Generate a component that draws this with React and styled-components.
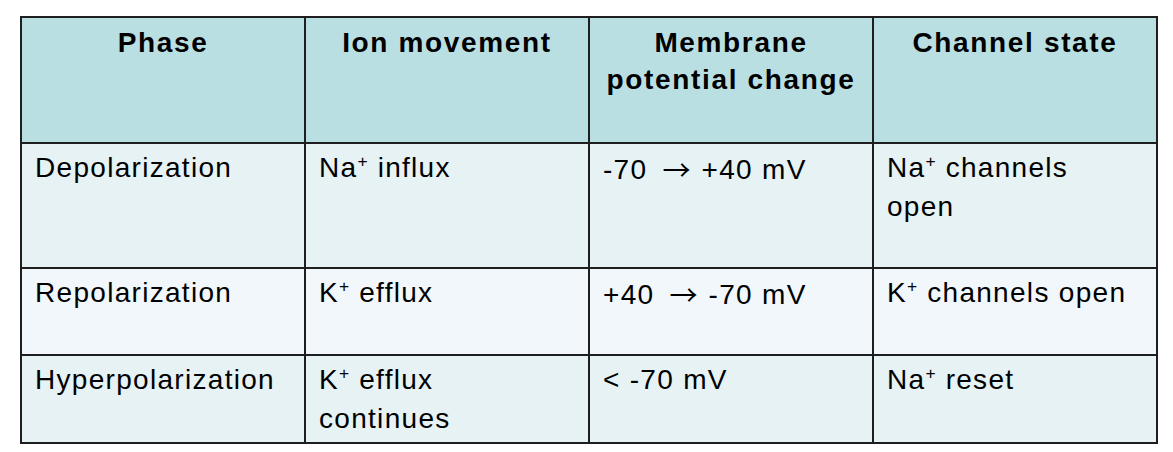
import React from "react";
import styled, { createGlobalStyle } from "styled-components";

const Global = createGlobalStyle`
  html, body { margin: 0; padding: 0; background: #ffffff; }
  body { font-family: "Liberation Sans", Arial, sans-serif; }
`;

const Page = styled.div`
  padding: 16px 0 0 20px;
`;

const Table = styled.table`
  border-collapse: collapse;
  table-layout: fixed;
  width: 1136px;
  font-family: "Liberation Sans", Arial, sans-serif;
  font-size: 28px;
  color: #000;
`;

const Row = styled.tr`
  height: ${(p) => p.$h}px;
  background: ${(p) => p.$bg};
`;

const Head = styled.th`
  border: 2px solid #1e1e1e;
  padding: 6px 8px;
  vertical-align: top;
  text-align: center;
  font-weight: bold;
  line-height: 37px;
  letter-spacing: 1.65px;
`;

const Cell = styled.td`
  border: 2px solid #1e1e1e;
  padding: 4px 21px 4px 13px;
  vertical-align: top;
  text-align: left;
  line-height: 39px;
  letter-spacing: 1.3px;
`;

const Sup = styled.sup`
  font-size: 0.62em;
  vertical-align: 0.55em;
  line-height: 0;
  letter-spacing: 0;
  margin-right: 1px;
`;

const Arrow = styled.span`
  font-family: "Noto Sans CJK SC", "DejaVu Sans", sans-serif;
  font-size: 28px;
  letter-spacing: 0;
  margin: 0 2px 0 6px;
  position: relative;
  top: 2px;
`;

const Ion = ({ el }) => (
  <>
    {el}
    <Sup>+</Sup>
  </>
);

const rows = [
  {
    h: 125,
    bg: "#e6f2f4",
    cells: [
      "Depolarization",
      <><Ion el="Na" /> influx</>,
      <>-70 <Arrow>{"\u2192"}</Arrow> +40 mV</>,
      <><Ion el="Na" /> channels open</>,
    ],
  },
  {
    h: 87,
    bg: "#f1f7fa",
    cells: [
      "Repolarization",
      <><Ion el="K" /> efflux</>,
      <>+40 <Arrow>{"\u2192"}</Arrow> -70 mV</>,
      <><Ion el="K" /> channels open</>,
    ],
  },
  {
    h: 87,
    bg: "#e6f2f4",
    cells: [
      "Hyperpolarization",
      <><Ion el="K" /> efflux continues</>,
      "< -70 mV",
      <><Ion el="Na" /> reset</>,
    ],
  },
];

export default function App() {
  return (
    <>
      <Global />
      <Page>
        <Table>
          <colgroup>
            <col style={{ width: 284 }} />
            <col style={{ width: 284 }} />
            <col style={{ width: 284 }} />
            <col style={{ width: 284 }} />
          </colgroup>
          <thead>
            <Row $h={126} $bg="#b9dfe3">
              <Head>Phase</Head>
              <Head>Ion movement</Head>
              <Head>Membrane potential change</Head>
              <Head>Channel state</Head>
            </Row>
          </thead>
          <tbody>
            {rows.map((r, i) => (
              <Row key={i} $h={r.h} $bg={r.bg}>
                {r.cells.map((c, j) => (
                  <Cell key={j}>{c}</Cell>
                ))}
              </Row>
            ))}
          </tbody>
        </Table>
      </Page>
    </>
  );
}
